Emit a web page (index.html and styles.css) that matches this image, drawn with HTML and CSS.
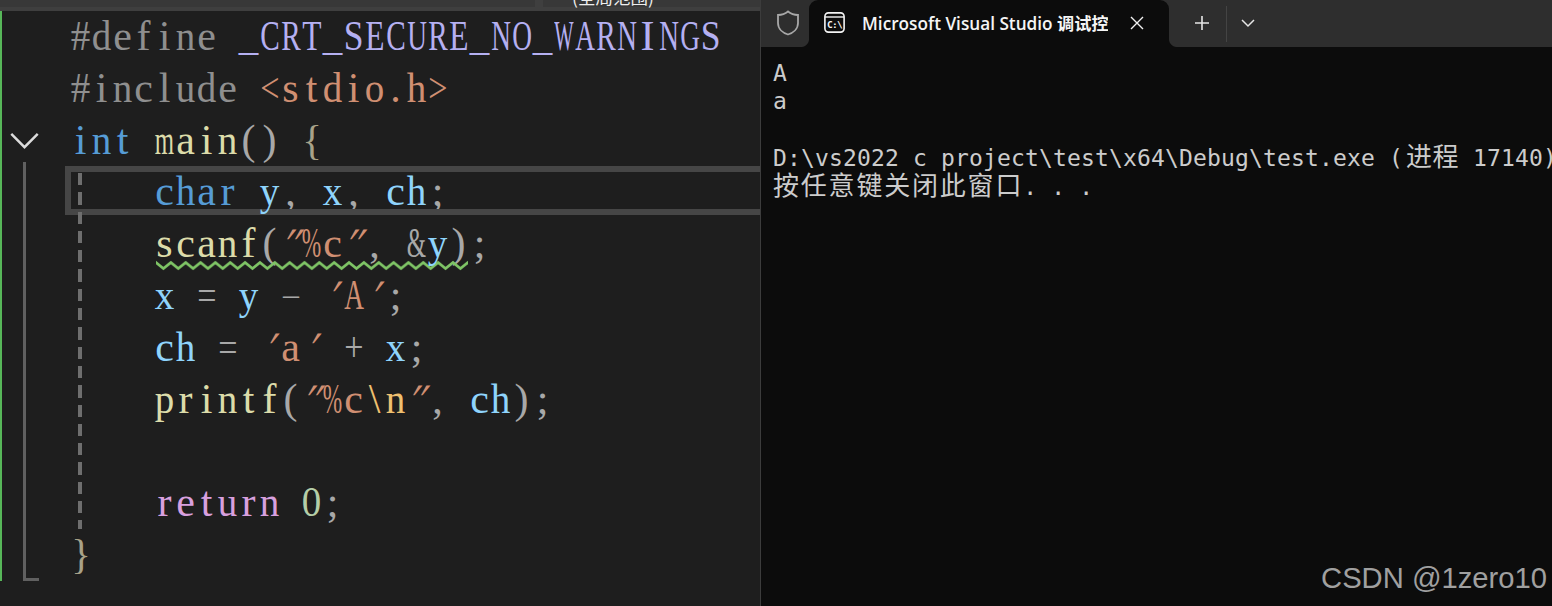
FILE: index.html
```html
<!DOCTYPE html>
<html lang="zh">
<head>
<meta charset="utf-8">
<title>Visual Studio</title>
<link rel="stylesheet" href="styles.css">
</head>
<body>
<main class="screen">
  <section class="editor">
    <div class="editor-top"><span class="stub stub-a"></span><span class="stub stub-b"><span class="scope">(全局范围)</span></span></div>
    <div class="code">
      <span class="change-bar"></span>
      <span class="outline"></span>
      <span class="current-line"></span>
      <span class="indent-guide"></span>
      <svg class="fold" viewBox="0 0 30 18"><path d="M1 1 L15 15 L29 1" fill="none" stroke="#dcdcdc" stroke-width="2.6"/></svg>
      <svg class="squiggle" width="312" height="11" viewBox="0 0 312 11"><defs><pattern id="wave" width="14.85" height="11" patternUnits="userSpaceOnUse"><path d="M-3.7 6 L0 2.5 L7.4 8.5 L14.85 2.5 L18.5 6" fill="none" stroke="#7ec465" stroke-width="2.6"/></pattern></defs><rect width="312" height="11" fill="url(#wave)"/></svg>
      <div class="line mono-cells"><span class="pre">#define </span><span class="mac">_CRT_SECURE_NO_WARNINGS</span></div>
      <div class="line mono-cells"><span class="pre">#include </span><span class="str">&lt;stdio.h&gt;</span></div>
      <div class="line mono-cells"><span class="kw">int</span> <span class="fn">main</span><span class="pun">()</span> <span class="brace">{</span></div>
      <div class="line mono-cells">    <span class="kw">char</span> <span class="var">y</span><span class="pun">,</span> <span class="var">x</span><span class="pun">,</span> <span class="var">ch</span><span class="pun">;</span></div>
      <div class="line mono-cells">    <span class="fn">scanf</span><span class="pun">(</span><span class="str">"%c"</span><span class="pun">, &amp;</span><span class="var">y</span><span class="pun">);</span></div>
      <div class="line mono-cells">    <span class="var">x</span><span class="pun"> = </span><span class="var">y</span><span class="pun"> - </span><span class="str">'A'</span><span class="pun">;</span></div>
      <div class="line mono-cells">    <span class="var">ch</span><span class="pun"> = </span><span class="str">'a'</span><span class="pun"> + </span><span class="var">x</span><span class="pun">;</span></div>
      <div class="line mono-cells">    <span class="fn">printf</span><span class="pun">(</span><span class="str">"%c</span><span class="esc">\n</span><span class="str">"</span><span class="pun">, </span><span class="var">ch</span><span class="pun">);</span></div>
      <div class="line mono-cells">&nbsp;</div>
      <div class="line mono-cells">    <span class="ret">return</span> <span class="num">0</span><span class="pun">;</span></div>
      <div class="line mono-cells"><span class="brace">}</span></div>
    </div>
  </section>
  <section class="terminal">
    <header class="tabbar">
      <svg class="shield" viewBox="0 0 24 26"><path d="M12 1.5 C9 4 6 5 2 5 V13 C2 19 7 23 12 24.5 C17 23 22 19 22 13 V5 C18 5 15 4 12 1.5 Z" fill="none" stroke="#a8a8a8" stroke-width="1.8"/></svg>
      <div class="tab">
        <svg class="tab-icon" viewBox="0 0 21 21"><rect x="0.9" y="0.9" width="19.2" height="19.2" rx="3.5" fill="none" stroke="#f4f4f4" stroke-width="1.6"/><path d="M1 5 H20" stroke="#f4f4f4" stroke-width="1.4"/><text x="10.5" y="15.5" text-anchor="middle" class="tab-icon-text">C:\</text></svg>
        <span class="tab-title">Microsoft Visual Studio 调试控</span>
        <svg class="tab-close" viewBox="0 0 14 14"><path d="M1 1 L13 13 M13 1 L1 13" stroke="#f2f2f2" stroke-width="1.4" fill="none"/></svg>
      </div>
      <svg class="plus" viewBox="0 0 16 16"><path d="M8 1 V15 M1 8 H15" stroke="#e6e6e6" stroke-width="1.6" fill="none"/></svg>
      <span class="tab-sep"></span>
      <svg class="caret" viewBox="0 0 14 9"><path d="M1 1 L7 7 L13 1" stroke="#e6e6e6" stroke-width="1.5" fill="none"/></svg>
    </header>
    <div class="console">
      <div class="out">A</div>
      <div class="out">a</div>
      <div class="out">&nbsp;</div>
      <div class="out">D:\vs2022 c project\test\x64\Debug\test.exe (<span class="cjk cjk-pair">进程</span> 17140)</div>
      <div class="out"><span class="cjk">按任意键关闭此窗口</span>. . .</div>
    </div>
    <div class="watermark">CSDN @1zero10</div>
  </section>
</main>
<script src="cells.js"></script>
</body>
</html>
```
FILE: styles.css
```css
* { box-sizing: border-box; }
html, body { margin: 0; height: 100%; background: #1e1e1e; overflow: hidden; }
.screen { display: flex; width: 1552px; height: 606px; }

.editor { width: 760px; flex: none; display: flex; flex-direction: column; background: #1e1e1e; overflow: hidden; }
.editor-top { height: 11px; flex: none; display: flex; gap: 8px; background: #3f3f3f; overflow: hidden; }
.stub { display: block; height: 7px; overflow: visible; }
.stub-a { width: 535px; background: #383838; }
.stub-b { flex: 1; background: #383838; }
.scope { display: block; margin: -12px 0 0 29px; color: #eeeeee; font: 17.5px/18px "Noto Sans CJK SC", sans-serif; white-space: nowrap; }

.code { position: relative; flex: 1; padding: 0 0 0 70px; }
.line { height: 51.8px; line-height: 51.8px; white-space: pre; font-family: "Liberation Serif", serif; font-size: 42px; color: #b4b4b4; }
.pre { color: #8f8f8f; }
.mac { color: #b5b0f2; }
.str { color: #d08f72; }
.esc { color: #efc070; }
.kw { color: #569cd6; }
.fn { color: #dcdcaa; }
.var { color: #8fd4fc; }
.pun { color: #a8a8a8; }
.brace { color: #a8a288; }
.ret { color: #d8a0df; }
.num { color: #b5cea8; }
.cell { display: inline-block; width: 21px; text-align: center; line-height: 51.8px; height: 51.8px; vertical-align: top; }
.cell-in { display: inline-block; white-space: pre; transform-origin: 50% 50%; }
.glyph-quote { transform: translateX(-2px) skewX(-34deg); }
.glyph-minus { transform: scale(1.5, 0.5); }
.glyph-brace { transform: scaleX(0.72); }

.change-bar { position: absolute; left: 0; top: 0; width: 2px; height: 570px; background: #57b759; }
.outline { position: absolute; left: 23px; top: 151px; width: 16px; height: 419px; border-left: 3px solid #606060; border-bottom: 3px solid #606060; }
.indent-guide { position: absolute; left: 78px; top: 162px; width: 4px; height: 356px; background: repeating-linear-gradient(to bottom, #6e6e6e 0, #6e6e6e 12.3px, transparent 12.3px, transparent 19.3px); }
.current-line { position: absolute; left: 65px; right: 0; top: 155px; height: 49px; border: 6px solid #464646; border-right: 0; }
.fold { position: absolute; left: 10px; top: 122px; width: 29px; height: 17px; }
.squiggle { position: absolute; left: 156px; top: 249px; }

.terminal { position: relative; flex: 1; min-width: 0; display: flex; flex-direction: column; background: #0c0c0c; border-left: 1px solid #3c3c3c; overflow: hidden; }
.tabbar { height: 47px; flex: none; display: flex; align-items: center; background: #2e2e2e; padding-left: 15px; }
.shield { width: 24px; height: 26px; flex: none; margin-top: -2px; }
.tab { position: relative; align-self: stretch; width: 360px; margin-left: 9px; flex: none; display: flex; align-items: center; background: #0c0c0c; border-radius: 9px 9px 0 0; padding-left: 15px; }
.tab::before, .tab::after { content: ""; position: absolute; bottom: 0; width: 8px; height: 8px; }
.tab::before { left: -8px; background: radial-gradient(circle at 0 0, #2e2e2e 7.5px, #0c0c0c 8.5px); }
.tab::after { right: -8px; background: radial-gradient(circle at 100% 0, #2e2e2e 7.5px, #0c0c0c 8.5px); }
.tab-icon { width: 21px; height: 21px; flex: none; margin-top: -2px; }
.tab-icon-text { font: 700 9.5px "DejaVu Sans Mono", monospace; letter-spacing: -0.8px; fill: #f4f4f4; }
.tab-title { margin-left: 17px; width: 246px; flex: none; white-space: nowrap; overflow: hidden; font: 600 17.2px/24px "Open Sans", "Noto Sans CJK SC", sans-serif; color: #f5f5f5; }
.tab-close { width: 14px; height: 14px; margin-left: 22px; flex: none; margin-top: -1px; }
.plus { width: 16px; height: 16px; margin-left: 25px; flex: none; margin-top: -1px; }
.tab-sep { width: 1px; height: 36px; margin-left: 16px; background: #444; flex: none; }
.caret { width: 14px; height: 9px; margin-left: 14px; flex: none; margin-top: -1px; }

.console { padding: 12px 0 0 12px; font: 23px/28.4px "DejaVu Sans Mono", monospace; letter-spacing: 0.15px; color: #cccccc; }
.out { height: 28.4px; white-space: pre; }
.cjk { font-family: "Noto Sans CJK SC", sans-serif; font-size: 26px; line-height: 0; letter-spacing: 1.8px; }
.cjk-pair { margin-left: 3px; letter-spacing: 0.6px; }
.watermark { position: absolute; right: 5px; bottom: 11px; font: 29.2px/34px "Liberation Sans", sans-serif; color: #a0a0a0; white-space: nowrap; }
```
FILE: cells.js
```js
// The editor uses a fixed 21px character grid: wrap each character in a cell, squeezing wide glyphs to fit.
var glyphClass = { '"': 'glyph-quote', "'": 'glyph-quote', '-': 'glyph-minus', '{': 'glyph-brace', '}': 'glyph-brace' };
document.querySelectorAll('.mono-cells').forEach(function (line) {
  var walker = document.createTreeWalker(line, NodeFilter.SHOW_TEXT);
  var nodes = [];
  while (walker.nextNode()) nodes.push(walker.currentNode);
  nodes.forEach(function (node) {
    var frag = document.createDocumentFragment();
    Array.from(node.nodeValue).forEach(function (ch) {
      var cell = document.createElement('span');
      cell.className = 'cell';
      var inner = document.createElement('span');
      inner.className = 'cell-in' + (glyphClass[ch] ? ' ' + glyphClass[ch] : '');
      inner.textContent = ch;
      cell.appendChild(inner);
      frag.appendChild(cell);
    });
    node.parentNode.replaceChild(frag, node);
  });
});
document.querySelectorAll('.cell-in').forEach(function (el) {
  var w = el.offsetWidth;
  if (w > 19.5) {
    el.style.transform = 'scaleX(' + (19.5 / w).toFixed(3) + ')';
    el.style.marginLeft = ((21 - w) / 2) + 'px';
    el.style.marginRight = ((21 - w) / 2) + 'px';
  }
});
```
